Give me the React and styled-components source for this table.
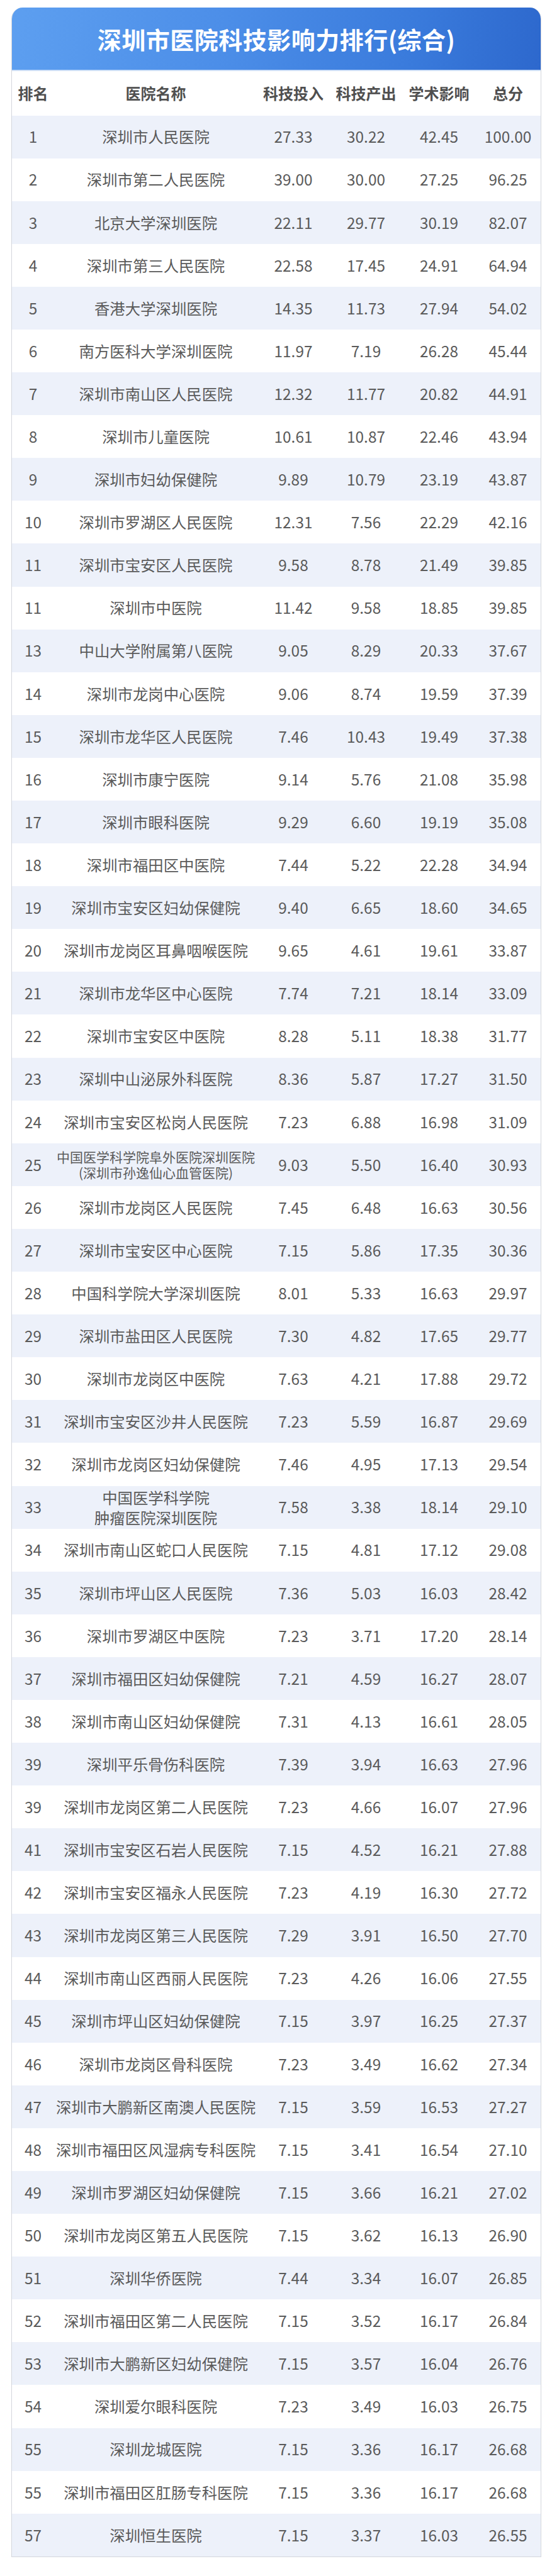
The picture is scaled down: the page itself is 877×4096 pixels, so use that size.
import React from 'react'
import styled, { createGlobalStyle } from 'styled-components'

const GlobalStyle = createGlobalStyle`
  html, body {
    margin: 0;
    padding: 0;
    background: #ffffff;
  }
  body {
    font-family: "Noto Sans CJK SC", "Noto Sans", sans-serif;
  }
`

const Page = styled.div`
  width: 877px;
  height: 4096px;
  padding: 12px 17px 0 18px;
  box-sizing: border-box;
  background: #ffffff;
`

const Card = styled.div`
  width: 842px;
  border: 1px solid #d3d6dc;
  border-top: none;
  border-radius: 18px 18px 0 0;
  overflow: hidden;
  box-sizing: border-box;
  background: #ffffff;
`

const Banner = styled.div`
  height: 101px;
  display: flex;
  align-items: center;
  justify-content: center;
  background: linear-gradient(100deg, #5d9ff0 0%, #4c8ee8 40%, #3a7bdc 75%, #2d68cd 100%);
  border-bottom: 2px solid #cfe0f7;
  box-sizing: border-box;
`

const Title = styled.h1`
  margin: 0;
  color: #ffffff;
  font-size: 38px;
  font-weight: 700;
  letter-spacing: 0.5px;
  line-height: 1;
`

const Grid = styled.div`
  display: grid;
  grid-template-columns: 67px 323px 114px 117px 115px 1fr;
  align-items: center;
  height: ${({ $h }) => $h}px;
  background: ${({ $alt }) => ($alt ? '#edf1fa' : '#ffffff')};
`

const HeadCell = styled.div`
  text-align: center;
  font-size: 24px;
  font-weight: 700;
  color: #4f4f4f;
  line-height: 1;
`

const Cell = styled.div`
  text-align: center;
  font-size: 24.4px;
  color: #5a5a5a;
  line-height: 1;
`

const Name = styled.div`
  text-align: center;
  color: #5a5a5a;
  white-space: nowrap;
  font-size: ${({ $small }) => ($small ? '21px' : '24.4px')};
  line-height: ${({ $small, $lines }) => ($lines > 1 ? ($small ? '24.5px' : '32px') : '1')};
`

const rows = [
  ['1', '深圳市人民医院', '27.33', '30.22', '42.45', '100.00'],
  ['2', '深圳市第二人民医院', '39.00', '30.00', '27.25', '96.25'],
  ['3', '北京大学深圳医院', '22.11', '29.77', '30.19', '82.07'],
  ['4', '深圳市第三人民医院', '22.58', '17.45', '24.91', '64.94'],
  ['5', '香港大学深圳医院', '14.35', '11.73', '27.94', '54.02'],
  ['6', '南方医科大学深圳医院', '11.97', '7.19', '26.28', '45.44'],
  ['7', '深圳市南山区人民医院', '12.32', '11.77', '20.82', '44.91'],
  ['8', '深圳市儿童医院', '10.61', '10.87', '22.46', '43.94'],
  ['9', '深圳市妇幼保健院', '9.89', '10.79', '23.19', '43.87'],
  ['10', '深圳市罗湖区人民医院', '12.31', '7.56', '22.29', '42.16'],
  ['11', '深圳市宝安区人民医院', '9.58', '8.78', '21.49', '39.85'],
  ['11', '深圳市中医院', '11.42', '9.58', '18.85', '39.85'],
  ['13', '中山大学附属第八医院', '9.05', '8.29', '20.33', '37.67'],
  ['14', '深圳市龙岗中心医院', '9.06', '8.74', '19.59', '37.39'],
  ['15', '深圳市龙华区人民医院', '7.46', '10.43', '19.49', '37.38'],
  ['16', '深圳市康宁医院', '9.14', '5.76', '21.08', '35.98'],
  ['17', '深圳市眼科医院', '9.29', '6.60', '19.19', '35.08'],
  ['18', '深圳市福田区中医院', '7.44', '5.22', '22.28', '34.94'],
  ['19', '深圳市宝安区妇幼保健院', '9.40', '6.65', '18.60', '34.65'],
  ['20', '深圳市龙岗区耳鼻咽喉医院', '9.65', '4.61', '19.61', '33.87'],
  ['21', '深圳市龙华区中心医院', '7.74', '7.21', '18.14', '33.09'],
  ['22', '深圳市宝安区中医院', '8.28', '5.11', '18.38', '31.77'],
  ['23', '深圳中山泌尿外科医院', '8.36', '5.87', '17.27', '31.50'],
  ['24', '深圳市宝安区松岗人民医院', '7.23', '6.88', '16.98', '31.09'],
  ['25', ['中国医学科学院阜外医院深圳医院', '(深圳市孙逸仙心血管医院)'], '9.03', '5.50', '16.40', '30.93', true],
  ['26', '深圳市龙岗区人民医院', '7.45', '6.48', '16.63', '30.56'],
  ['27', '深圳市宝安区中心医院', '7.15', '5.86', '17.35', '30.36'],
  ['28', '中国科学院大学深圳医院', '8.01', '5.33', '16.63', '29.97'],
  ['29', '深圳市盐田区人民医院', '7.30', '4.82', '17.65', '29.77'],
  ['30', '深圳市龙岗区中医院', '7.63', '4.21', '17.88', '29.72'],
  ['31', '深圳市宝安区沙井人民医院', '7.23', '5.59', '16.87', '29.69'],
  ['32', '深圳市龙岗区妇幼保健院', '7.46', '4.95', '17.13', '29.54'],
  ['33', ['中国医学科学院', '肿瘤医院深圳医院'], '7.58', '3.38', '18.14', '29.10'],
  ['34', '深圳市南山区蛇口人民医院', '7.15', '4.81', '17.12', '29.08'],
  ['35', '深圳市坪山区人民医院', '7.36', '5.03', '16.03', '28.42'],
  ['36', '深圳市罗湖区中医院', '7.23', '3.71', '17.20', '28.14'],
  ['37', '深圳市福田区妇幼保健院', '7.21', '4.59', '16.27', '28.07'],
  ['38', '深圳市南山区妇幼保健院', '7.31', '4.13', '16.61', '28.05'],
  ['39', '深圳平乐骨伤科医院', '7.39', '3.94', '16.63', '27.96'],
  ['39', '深圳市龙岗区第二人民医院', '7.23', '4.66', '16.07', '27.96'],
  ['41', '深圳市宝安区石岩人民医院', '7.15', '4.52', '16.21', '27.88'],
  ['42', '深圳市宝安区福永人民医院', '7.23', '4.19', '16.30', '27.72'],
  ['43', '深圳市龙岗区第三人民医院', '7.29', '3.91', '16.50', '27.70'],
  ['44', '深圳市南山区西丽人民医院', '7.23', '4.26', '16.06', '27.55'],
  ['45', '深圳市坪山区妇幼保健院', '7.15', '3.97', '16.25', '27.37'],
  ['46', '深圳市龙岗区骨科医院', '7.23', '3.49', '16.62', '27.34'],
  ['47', '深圳市大鹏新区南澳人民医院', '7.15', '3.59', '16.53', '27.27'],
  ['48', '深圳市福田区风湿病专科医院', '7.15', '3.41', '16.54', '27.10'],
  ['49', '深圳市罗湖区妇幼保健院', '7.15', '3.66', '16.21', '27.02'],
  ['50', '深圳市龙岗区第五人民医院', '7.15', '3.62', '16.13', '26.90'],
  ['51', '深圳华侨医院', '7.44', '3.34', '16.07', '26.85'],
  ['52', '深圳市福田区第二人民医院', '7.15', '3.52', '16.17', '26.84'],
  ['53', '深圳市大鹏新区妇幼保健院', '7.15', '3.57', '16.04', '26.76'],
  ['54', '深圳爱尔眼科医院', '7.23', '3.49', '16.03', '26.75'],
  ['55', '深圳龙城医院', '7.15', '3.36', '16.17', '26.68'],
  ['55', '深圳市福田区肛肠专科医院', '7.15', '3.36', '16.17', '26.68'],
  ['57', '深圳恒生医院', '7.15', '3.37', '16.03', '26.55'],
]

const headers = ['排名', '医院名称', '科技投入', '科技产出', '学术影响', '总分']

function App() {
  return (
    <>
      <GlobalStyle />
      <Page>
        <Card>
          <Banner>
            <Title>深圳市医院科技影响力排行(综合)</Title>
          </Banner>
          <Grid $h={70.5}>
            {headers.map(h => <HeadCell key={h}>{h}</HeadCell>)}
          </Grid>
          {rows.map((r, i) => {
            const lines = Array.isArray(r[1]) ? r[1] : [r[1]]
            return (
              <Grid key={i} $h={68.1} $alt={i % 2 === 0}>
                <Cell>{r[0]}</Cell>
                <Name $small={r[6]} $lines={lines.length}>
                  {lines.map((l, j) => <div key={j}>{l}</div>)}
                </Name>
                <Cell>{r[2]}</Cell>
                <Cell>{r[3]}</Cell>
                <Cell>{r[4]}</Cell>
                <Cell>{r[5]}</Cell>
              </Grid>
            )
          })}
        </Card>
      </Page>
    </>
  )
}

export default App
